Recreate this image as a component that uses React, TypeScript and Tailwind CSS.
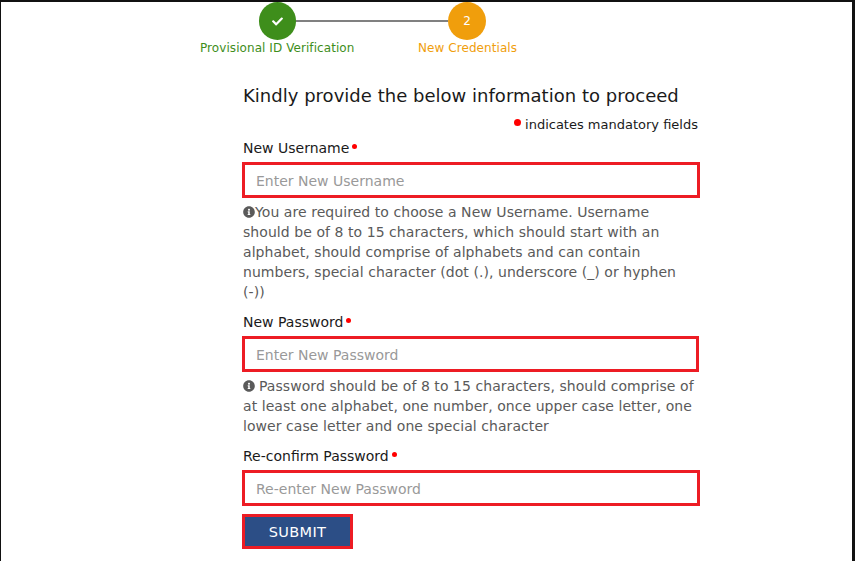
import { FaCheck, FaInfoCircle } from "react-icons/fa";

function Req() {
  return <span className="ml-[3px] mb-[6px] inline-block w-[5px] h-[5px] rounded-full bg-[#ff0000] align-middle" />;
}

function Field({ label, placeholder, width = "w-[458px]" }: { label: string; placeholder: string; width?: string }) {
  return (
    <div className="flex flex-col">
      <label className="text-[14px] leading-[20px] text-[#1a1a1a]">
        {label}
        <Req />
      </label>
      <input
        type="text"
        placeholder={placeholder}
        className={`${width} h-[36px] mt-[4px] -ml-[1px] pl-[11px] pr-[9px] pt-[2px] border-[3px] border-[#ed1c24] bg-white text-[14px] outline-none placeholder:text-[#999999]`}
      />
    </div>
  );
}

export default function App() {
  return (
    <main
      className="h-[561px] overflow-hidden bg-white border-t-2 border-l border-r-[3px] border-[#111111]"
      style={{ fontFamily: '"DejaVu Sans", Verdana, sans-serif' }}
    >
      <div className="ml-[198px] w-[330px]">
        <div className="flex items-center pl-[60px]">
          <div className="w-[37px] h-[38px] rounded-full bg-[#3e8e1b] flex items-center justify-center text-white shrink-0">
            <FaCheck size={11} />
          </div>
          <div className="w-[152px] h-[2px] bg-[#808080]" />
          <div className="w-[38px] h-[38px] rounded-full bg-[#f09e0c] flex items-center justify-center text-white text-[12px] shrink-0">
            2
          </div>
        </div>
        <div className="flex text-[12px] leading-[14px] mt-[1px] tracking-[0.07px]">
          <span className="w-[219px] pl-[1px] text-[#3e8e1b]">Provisional ID Verification</span>
          <span className="text-[#f09e0c]">New Credentials</span>
        </div>
      </div>

      <form className="ml-[242px] w-[460px] mt-[29px] flex flex-col">
        <h1 className="text-[18px] leading-[24px] tracking-[0.02px] text-[#1a1a1a]">Kindly provide the below information to proceed</h1>
        <p className="w-[455px] mt-[9px] text-right text-[13px] leading-[16px] text-[#1a1a1a]">
          <span className="mr-[4px] mb-[6px] inline-block w-[7px] h-[7px] rounded-full bg-[#ff0000] align-middle" />
          indicates mandatory fields
        </p>

        <div className="mt-[5px]">
          <Field label="New Username" placeholder="Enter New Username" />
        </div>
        <p className="w-[456px] mt-[4px] text-[14px] leading-[20px] tracking-[0.06px] text-[#5a5a5a]">
          <FaInfoCircle className="inline-block mb-[2px]" size={12} />
          You are required to choose a New Username. Username should be of 8 to 15 characters, which should start with an
          alphabet, should comprise of alphabets and can contain numbers, special character (dot (.), underscore (_) or
          hyphen (-))
        </p>

        <div className="mt-[10px]">
          <Field label="New Password" placeholder="Enter New Password" width="w-[457px]" />
        </div>
        <p className="w-[456px] mt-[4px] text-[14px] leading-[20px] tracking-[0.06px] text-[#5a5a5a]">
          <FaInfoCircle className="inline-block mb-[2px] mr-[4px]" size={12} />
          Password should be of 8 to 15 characters, should comprise of at least one alphabet, one number, once upper case
          letter, one lower case letter and one special character
        </p>

        <div className="mt-[10px]">
          <Field label="Re-confirm Password" placeholder="Re-enter New Password" />
        </div>
        <button
          type="button"
          className="mt-[8px] -ml-[1px] w-[111px] h-[35px] pt-[2px] border-[3px] border-[#ed1c24] bg-[#2c4e86] text-white text-[14.5px] tracking-[0.35px]"
        >
          SUBMIT
        </button>
      </form>
    </main>
  );
}
